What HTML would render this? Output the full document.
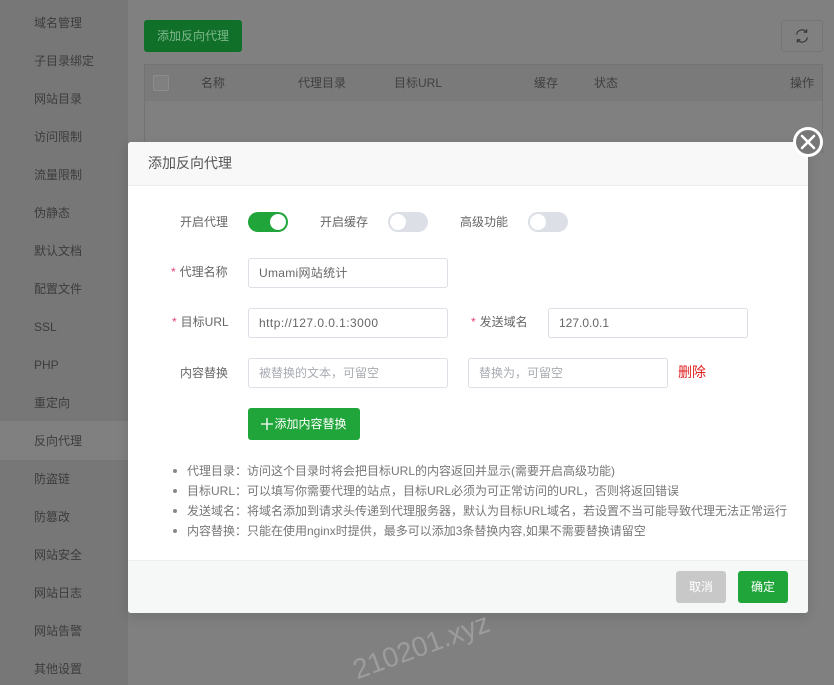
<!DOCTYPE html>
<html lang="zh"><head><meta charset="utf-8">
<style>
*{box-sizing:border-box}
html,body{margin:0;padding:0;width:834px;height:685px;overflow:hidden;background:#808080;font-family:"Liberation Sans","Noto Sans CJK SC",sans-serif;font-size:12px;color:#3a3a3a}
body{position:relative}
#wrap{position:absolute;left:0;top:0;width:834px;height:685px;overflow:hidden;background:#808080}
.a{position:absolute;white-space:nowrap}
#side{position:absolute;left:0;top:0;width:128px;height:685px;background:#777}
#active{position:absolute;left:0;top:421px;width:128px;height:39px;background:#808080}
.s{position:absolute;left:34px;font-size:12px;line-height:16px;color:#3c3c3c;white-space:nowrap}
.th{position:absolute;top:75px;line-height:16px;color:#3f3f3f;white-space:nowrap}
#modal{position:absolute;left:128px;top:142px;width:680px;height:471px;background:#fff;border-radius:3px;box-shadow:0 4px 12px rgba(0,0,0,.12)}
#mh{position:absolute;left:0;top:0;width:680px;height:44px;background:#f8f8f8;border-bottom:1px solid #eee;border-radius:3px 3px 0 0;font-size:14px;line-height:42px;padding-left:20px;color:#555}
#mf{position:absolute;left:0;top:418px;width:680px;height:53px;background:#f6f8f8;border-top:1px solid #eef0f0;border-radius:0 0 3px 3px}
.lab{position:absolute;font-size:12px;line-height:16px;color:#666;white-space:nowrap}
.lab i{font-style:normal;color:#e6457a;margin-right:4px}
.inp{position:absolute;width:200px;height:30px;background:#fff;border:1px solid #dcdfe6;border-radius:3px;line-height:29px;padding-left:10px;color:#666;font-size:12px;white-space:nowrap}
.ph{color:#a8abb2}
.sw{position:absolute;width:40px;height:20px;border-radius:10px;background:#dcdfe6}
.sw b{position:absolute;top:2px;left:2px;width:16px;height:16px;border-radius:50%;background:#fff}
.sw.on{background:#20a53a}.sw.on b{left:22px}
.btn{position:absolute;border-radius:3px;color:#fff;text-align:center;font-size:12px;white-space:nowrap}
.tip{position:absolute;left:59px;font-size:12px;line-height:16px;color:#777;white-space:nowrap}
.tip:before{content:"";position:absolute;left:-14px;top:6px;width:4px;height:4px;border-radius:50%;background:#888}
</style></head><body><div id="wrap">
<div id="side"></div>
<div id="active"></div>
<div class="s" style="top:15px">域名管理</div>
<div class="s" style="top:53px">子目录绑定</div>
<div class="s" style="top:91px">网站目录</div>
<div class="s" style="top:129px">访问限制</div>
<div class="s" style="top:167px">流量限制</div>
<div class="s" style="top:205px">伪静态</div>
<div class="s" style="top:243px">默认文档</div>
<div class="s" style="top:281px">配置文件</div>
<div class="s" style="top:319px">SSL</div>
<div class="s" style="top:357px">PHP</div>
<div class="s" style="top:395px">重定向</div>
<div class="s" style="top:433px">反向代理</div>
<div class="s" style="top:471px">防盗链</div>
<div class="s" style="top:509px">防篡改</div>
<div class="s" style="top:547px">网站安全</div>
<div class="s" style="top:585px">网站日志</div>
<div class="s" style="top:623px">网站告警</div>
<div class="s" style="top:661px">其他设置</div>

<div class="btn" style="left:144px;top:20px;width:98px;height:32px;background:#10702a;color:#7fb98d;line-height:32px">添加反向代理</div>
<div class="a" style="left:781px;top:20px;width:42px;height:32px;border:1px solid #757575;border-radius:3px"></div>
<svg class="a" style="left:794px;top:28px" width="16" height="16" viewBox="0 0 16 16" fill="none" stroke="#333" stroke-width="1.1"><path d="M2.600 6.500A5.500 5.500 0 0 1 12 3.600"/><path d="M12.700 1.200v3h-3"/><path d="M13.400 9.500A5.500 5.500 0 0 1 4 12.400"/><path d="M3.300 14.800v-3h3"/></svg>

<div class="a" style="left:144px;top:64px;width:679px;height:90px;border:1px solid #737373;border-bottom:0"></div>
<div class="a" style="left:145px;top:65px;width:677px;height:36px;background:#7a7a7a"></div>
<div class="a" style="left:153px;top:75px;width:16px;height:16px;border:1px solid #8c8c8c;border-radius:2px;background:#808080"></div>
<div class="th" style="left:201px">名称</div>
<div class="th" style="left:298px">代理目录</div>
<div class="th" style="left:394px">目标URL</div>
<div class="th" style="left:534px">缓存</div>
<div class="th" style="left:594px">状态</div>
<div class="th" style="left:790px">操作</div>

<div id="modal">
<div id="mh">添加反向代理</div>
<div id="mf"></div>
<div class="lab" style="left:52px;top:72px">开启代理</div>
<div class="sw on" style="left:120px;top:70px"><b></b></div>
<div class="lab" style="left:192px;top:72px">开启缓存</div>
<div class="sw" style="left:260px;top:70px"><b></b></div>
<div class="lab" style="left:332px;top:72px">高级功能</div>
<div class="sw" style="left:400px;top:70px"><b></b></div>

<div class="lab" style="left:43px;top:122px"><i>*</i>代理名称</div>
<div class="inp" style="left:120px;top:116px;letter-spacing:.3px">Umami网站统计</div>
<div class="lab" style="left:44px;top:172px"><i>*</i>目标URL</div>
<div class="inp" style="left:120px;top:166px;letter-spacing:.45px">http://127.0.0.1:3000</div>
<div class="lab" style="left:343px;top:172px"><i>*</i>发送域名</div>
<div class="inp" style="left:420px;top:166px">127.0.0.1</div>
<div class="lab" style="left:52px;top:223px">内容替换</div>
<div class="inp ph" style="left:120px;top:216px">被替换的文本，可留空</div>
<div class="inp ph" style="left:340px;top:216px">替换为，可留空</div>
<div class="lab" style="left:550px;top:222px;color:#e02020;font-size:14px">删除</div>
<div class="btn" style="left:120px;top:266px;width:112px;height:32px;background:#20a53a;line-height:32px"><svg width="12" height="12" viewBox="0 0 12 12" style="vertical-align:-2px;margin-right:1px"><path d="M0 6H12M6 0V12" stroke="#fff" stroke-width="1.3"/></svg>添加内容替换</div>

<div class="tip" style="top:321px">代理目录：访问这个目录时将会把目标URL的内容返回并显示(需要开启高级功能)</div>
<div class="tip" style="top:341px">目标URL：可以填写你需要代理的站点，目标URL必须为可正常访问的URL，否则将返回错误</div>
<div class="tip" style="top:361px">发送域名：将域名添加到请求头传递到代理服务器，默认为目标URL域名，若设置不当可能导致代理无法正常运行</div>
<div class="tip" style="top:381px">内容替换：只能在使用nginx时提供，最多可以添加3条替换内容,如果不需要替换请留空</div>

<div class="btn" style="left:548px;top:429px;width:50px;height:32px;background:#c8c8c8;line-height:32px">取消</div>
<div class="btn" style="left:610px;top:429px;width:50px;height:32px;background:#20a53a;line-height:32px">确定</div>
</div>

<svg class="a" style="left:793px;top:127px" width="30" height="30" viewBox="0 0 30 30"><circle cx="15" cy="15" r="13.500" fill="#777" stroke="#fff" stroke-width="3"/><path d="M9 9L21 21M21 9L9 21" stroke="#fff" stroke-width="2.600" stroke-linecap="round"/></svg>

<div class="a" style="left:354px;top:654px;font-family:'Liberation Sans',sans-serif;font-size:28px;line-height:34px;color:#9c9c9c;transform:rotate(-20deg);transform-origin:0 50%">210201.xyz</div>
</div></body></html>
